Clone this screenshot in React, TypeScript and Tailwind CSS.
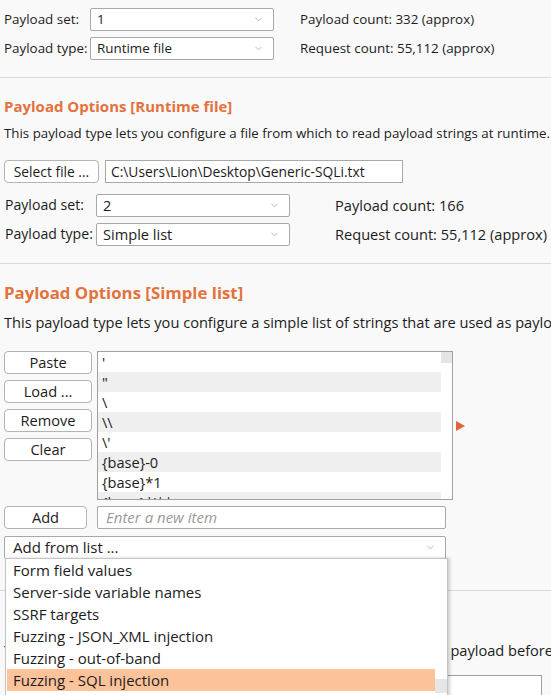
import { ChevronDown } from "lucide-react";

const listItems = ["'", '"', "\\", "\\\\", "\\'", "{base}-0", "{base}*1", "{base}*'||"];

const dropItems = [
  "Form field values",
  "Server-side variable names",
  "SSRF targets",
  "Fuzzing - JSON_XML injection",
  "Fuzzing - out-of-band",
  "Fuzzing - SQL injection",
  "Fuzzing - XSS",
];

function Select({ value, className }: { value: string; className: string }) {
  return (
    <div
      className={`flex h-[23px] shrink-0 items-center justify-between rounded-[2px] border border-[#a8a8a8] bg-white pl-[6px] pr-[9px] ${className}`}
    >
      <span className="whitespace-nowrap">{value}</span>
      <ChevronDown className="h-[11px] w-[11px] shrink-0 text-[#9a9a9a]" strokeWidth={1.5} />
    </div>
  );
}

function Btn({ label, className = "" }: { label: string; className?: string }) {
  return (
    <div
      className={`flex h-[23px] shrink-0 items-center justify-center whitespace-nowrap rounded-[4px] border border-[#b4b4b4] bg-white ${className}`}
    >
      {label}
    </div>
  );
}

export default function App() {
  return (
    <div className="relative h-[695px] w-[551px] overflow-hidden bg-[#f9f9f9] font-['Open_Sans',sans-serif] text-[13.4px] leading-none text-[#1c1c1c]">
      {/* payload set 1 */}
      <div className="pt-[8px]">
        <div className="flex items-center whitespace-nowrap">
          <span className="w-[90px] shrink-0 pl-[4px]">Payload set:</span>
          <Select value="1" className="w-[184px]" />
          <span className="ml-[26px]">Payload count: 332 (approx)</span>
        </div>
        <div className="mt-[6px] flex items-center whitespace-nowrap">
          <span className="w-[90px] shrink-0 pl-[4px]">Payload type:</span>
          <Select value="Runtime file" className="w-[184px]" />
          <span className="ml-[26px]">Request count: 55,112 (approx)</span>
        </div>
      </div>

      <div className="mt-[17px] h-px bg-[#d9d9d9]" />

      <div className="px-[4px]">
        <h2 className="mt-[18px] flex h-[20px] items-center text-[15px] font-bold text-[#e3723d]">
          Payload Options [Runtime file]
        </h2>
        <p className="mt-[8px] flex h-[20px] items-center whitespace-nowrap text-[13.3px]">
          This payload type lets you configure a file from which to read payload strings at runtime.
        </p>
        <div className="mt-[16px] flex items-center gap-[6px] whitespace-nowrap text-[13.8px]">
          <Btn label="Select file ..." className="w-[95px] bg-[#efefef]" />
          <div className="flex h-[23px] w-[298px] shrink-0 items-center border border-[#a8a8a8] bg-white pl-[5px]">
            C:\Users\Lion\Desktop\Generic-SQLi.txt
          </div>
        </div>
        <div className="whitespace-nowrap text-[14.6px]">
          <div className="mt-[11px] flex items-center">
            <span className="w-[92px] shrink-0 pl-[1px] text-[14.1px]">Payload set:</span>
            <Select value="2" className="w-[194px]" />
            <span className="ml-[45px]">Payload count: 166</span>
          </div>
          <div className="mt-[6px] flex items-center">
            <span className="w-[92px] shrink-0 pl-[1px] text-[14.1px]">Payload type:</span>
            <Select value="Simple list" className="w-[194px]" />
            <span className="ml-[45px]">Request count: 55,112 (approx)</span>
          </div>
        </div>
      </div>

      <div className="mt-[17px] h-px bg-[#d9d9d9]" />

      <div className="px-[4px] text-[14.6px]">
        <h2 className="mt-[19px] flex h-[20px] items-center text-[16.8px] font-bold text-[#e3723d]">
          Payload Options [Simple list]
        </h2>
        <p className="mt-[9px] flex h-[20px] items-center whitespace-nowrap">
          This payload type lets you configure a simple list of strings that are used as payloads.
        </p>

        <div className="mt-[19px] flex items-start">
          <div className="flex w-[88px] shrink-0 flex-col gap-[6px]">
            <Btn label="Paste" />
            <Btn label="Load ..." />
            <Btn label="Remove" />
            <Btn label="Clear" />
          </div>
          <div className="ml-[5px] flex h-[149px] w-[356px] shrink-0 border border-[#a0a0a0] bg-white">
            <div className="flex-1 overflow-hidden">
              {listItems.map((it, i) => (
                <div
                  key={i}
                  className={`flex h-[20px] items-center pl-[4px] ${i % 2 === 1 ? "bg-[#efefef]" : "bg-white"}`}
                >
                  {it}
                </div>
              ))}
            </div>
            <div className="w-[11px]">
              <div className="h-[11px] bg-[#e4e4e4]" />
            </div>
          </div>
          <svg className="ml-[3px] mt-[70px] shrink-0" width="9" height="10" viewBox="0 0 9 10">
            <path d="M0 0 L9 5 L0 10 Z" fill="#e4633a" />
          </svg>
        </div>

        <div className="mt-[6px] flex items-center">
          <Btn label="Add" className="w-[83px]" />
          <div className="ml-[10px] flex h-[23px] w-[349px] shrink-0 items-center rounded-[2px] border border-[#a8a8a8] bg-white pl-[8px] text-[15px] italic text-[#9a9a9a]">
            Enter a new item
          </div>
        </div>
        <Select value="Add from list ..." className="mt-[7px] w-[442px] pl-[8px] text-[15px]" />
      </div>

      {/* section partly hidden behind the open list */}
      <div className="mt-[31px] h-px bg-[#d9d9d9]" />
      <div className="px-[4px] text-[14.6px]">
        <h2 className="mt-[20px] flex h-[20px] items-center text-[16.8px] font-bold text-[#e3723d]">
          Payload Processing
        </h2>
        <p className="mt-[9px] flex h-[20px] items-center whitespace-nowrap">
          You can define rules to perform various processing tasks on each payload before it is used.
        </p>
        <div className="ml-[93px] mt-[15px] h-[60px] w-[445px] border border-[#a0a0a0] bg-white" />
      </div>

      {/* open dropdown */}
      <div className="absolute left-[5px] top-[558px] flex w-[443px] border border-[#c4c4c4] bg-white text-[15px] shadow-[2px_0_3px_rgba(0,0,0,0.18)]">
        <div className="flex-1 pl-[1px]">
          {dropItems.map((it, i) => (
            <div
              key={it}
              className={`flex h-[22px] items-center whitespace-nowrap pl-[6px] ${i === 5 ? "bg-[#fcc39a]" : ""}`}
            >
              {it}
            </div>
          ))}
        </div>
        <div className="flex w-[12px] flex-col justify-end">
          <div className="mb-[20px] h-[14px] bg-[#e6e6e6]" />
        </div>
      </div>
    </div>
  );
}
